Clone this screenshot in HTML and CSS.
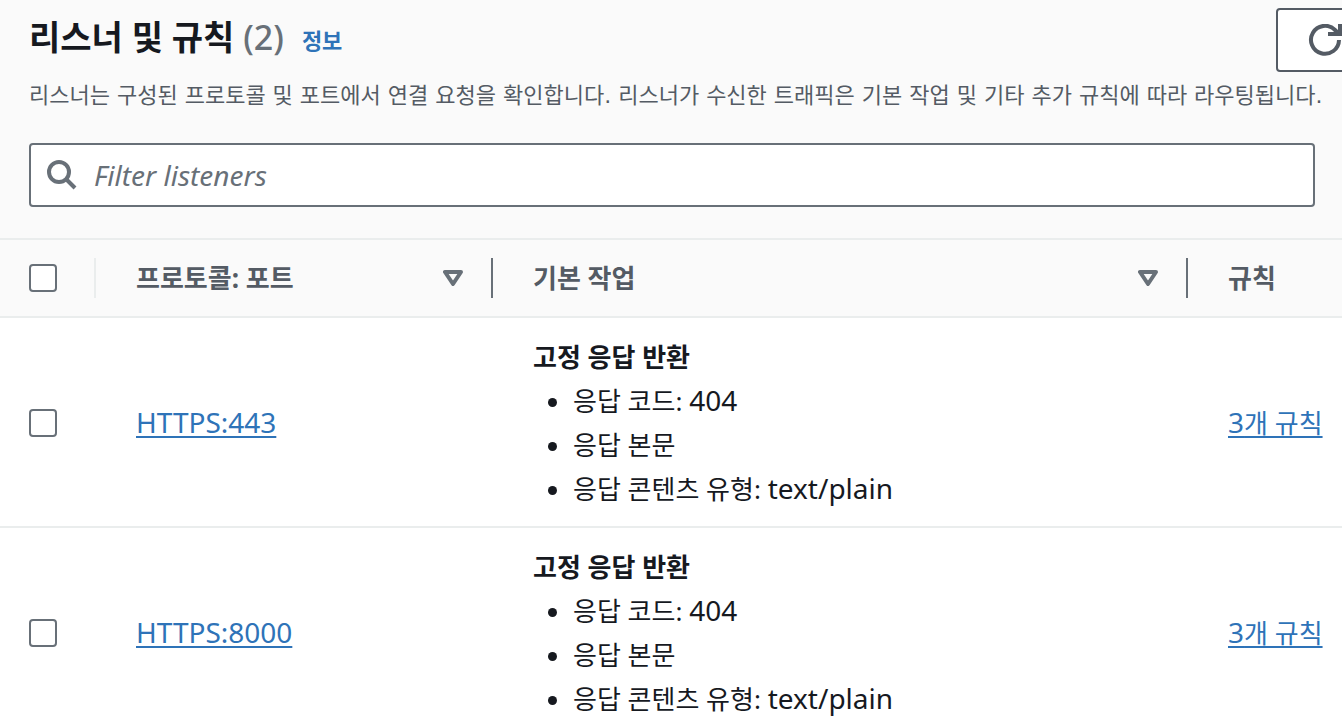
FILE: index.html
```html
<!DOCTYPE html>
<html lang="ko">
<head>
  <meta charset="UTF-8" />
  <meta name="viewport" content="width=device-width, initial-scale=1.0"/>
  <title>리스너 및 규칙</title>
  <link rel="stylesheet" href="styles.css">
</head>
<body>
  <main class="panel">
    <header class="panel-header">
      <div class="title-row">
        <h1>리스너 및 규칙 <span class="count">(2)</span></h1>
        <a class="info" href="#info">정보</a>
        <button class="refresh" type="button" aria-label="새로 고침">
          <svg viewBox="0 0 36 32" width="36" height="32" fill="none" stroke="currentColor" stroke-width="4">
            <path d="M32 16a14 14 0 1 1-4-10l4 4"/>
            <path d="M33 0v10H21"/>
          </svg>
        </button>
      </div>
      <p class="description">리스너는 구성된 프로토콜 및 포트에서 연결 요청을 확인합니다. 리스너가 수신한 트래픽은 기본 작업 및 기타 추가 규칙에 따라 라우팅됩니다.</p>
      <label class="filter">
        <svg viewBox="0 0 32 32" width="32" height="32" fill="none" stroke="currentColor" stroke-width="4">
          <circle cx="13" cy="13" r="10"/>
          <path d="M20 20l9 9"/>
        </svg>
        <input type="text" placeholder="Filter listeners" aria-label="Filter listeners">
      </label>
    </header>

    <table class="listeners">
      <colgroup>
        <col class="col-check">
        <col class="col-port">
        <col class="col-action">
        <col>
      </colgroup>
      <thead>
        <tr>
          <th><div class="cell light"><input type="checkbox" aria-label="모두 선택"></div></th>
          <th>
            <div class="cell">프로토콜: 포트
              <button class="sort" type="button" aria-label="프로토콜: 포트 정렬">
                <svg viewBox="0 0 20 16" width="20" height="16" fill="none" stroke="currentColor" stroke-width="4" stroke-linejoin="round"><path d="M2 2h16l-8 12z"/></svg>
              </button>
            </div>
          </th>
          <th>
            <div class="cell">기본 작업
              <button class="sort" type="button" aria-label="기본 작업 정렬">
                <svg viewBox="0 0 20 16" width="20" height="16" fill="none" stroke="currentColor" stroke-width="4" stroke-linejoin="round"><path d="M2 2h16l-8 12z"/></svg>
              </button>
            </div>
          </th>
          <th><div class="cell last">규칙</div></th>
        </tr>
      </thead>
      <tbody>
        <tr>
          <td><input type="checkbox" aria-label="HTTPS:443 선택"></td>
          <td><a class="latin" href="#https-443">HTTPS:443</a></td>
          <td>
            <strong>고정 응답 반환</strong>
            <ul>
              <li>응답 코드: <span class="latin">404</span></li>
              <li>응답 본문</li>
              <li>응답 콘텐츠 유형: <span class="latin">text/plain</span></li>
            </ul>
          </td>
          <td><a href="#rules-443"><span class="latin">3</span>개 규칙</a></td>
        </tr>
        <tr>
          <td><input type="checkbox" aria-label="HTTPS:8000 선택"></td>
          <td><a class="latin" href="#https-8000">HTTPS:8000</a></td>
          <td>
            <strong>고정 응답 반환</strong>
            <ul>
              <li>응답 코드: <span class="latin">404</span></li>
              <li>응답 본문</li>
              <li>응답 콘텐츠 유형: <span class="latin">text/plain</span></li>
            </ul>
          </td>
          <td><a href="#rules-8000"><span class="latin">3</span>개 규칙</a></td>
        </tr>
      </tbody>
    </table>
  </main>
</body>
</html>
```
FILE: styles.css
```css
* {
  box-sizing: border-box;
}
body {
  margin: 0;
  font-family: "Noto Sans", "Noto Sans CJK KR", sans-serif;
  font-size: 26px;
  line-height: 44px;
  color: #16191f;
  background: #fff;
  overflow-x: hidden;
}
a {
  color: #2e73b8;
  text-decoration-thickness: 2px;
  text-underline-offset: 3px;
}
.panel {
  overflow: hidden;
}
.panel-header {
  padding: 8px 27px 31px 29px;
  background: #fafafa;
}
.title-row {
  display: flex;
  align-items: flex-start;
}
h1 {
  margin: 7px 18px 0 0;
  font-size: 34px;
  line-height: 44px;
  white-space: nowrap;
}
.count {
  font-weight: 500;
  color: #687078;
}
.info {
  margin-top: 10px;
  font-size: 22px;
  font-weight: 700;
  text-decoration: none;
}
/* the action bar runs past the right edge of the panel */
.refresh {
  display: flex;
  flex-shrink: 0;
  align-items: center;
  justify-content: center;
  width: 98px;
  height: 64px;
  margin: 0 -59px 0 auto;
  padding: 0;
  color: #545b64;
  background: #fff;
  border: 2px solid #545b64;
  border-radius: 4px;
}
.description {
  margin: 8px 0 31px;
  font-family: "DejaVu Sans", "Noto Sans CJK KR", sans-serif;
  font-size: 22px;
  line-height: 32px;
  color: #545b64;
  white-space: nowrap;
}
.filter {
  display: flex;
  align-items: center;
  gap: 16px;
  height: 64px;
  padding: 0 15px;
  color: #687078;
  background: #fff;
  border: 2px solid #687078;
  border-radius: 4px;
}
.filter input {
  flex: 1;
  min-width: 0;
  padding: 0;
  font: inherit;
  font-size: 28px;
  color: #16191f;
  background: none;
  border: 0;
  outline: 0;
}
.filter input::placeholder {
  font-style: italic;
  color: #687078;
  opacity: 1;
}
.listeners {
  width: 100%;
  table-layout: fixed;
  border-collapse: separate;
  border-spacing: 0;
}
.col-check {
  width: 96px;
}
.col-port {
  width: 397px;
}
.col-action {
  width: 695px;
}
th {
  padding: 18px 0;
  text-align: left;
  color: #545b64;
  background: #fafafa;
  border-bottom: 2px solid #eaeded;
}
thead th {
  border-top: 2px solid #eaeded;
}
.cell {
  display: flex;
  align-items: center;
  justify-content: space-between;
  height: 40px;
  padding: 0 28px 0 40px;
  border-right: 2px solid #687078;
  white-space: nowrap;
}
.cell.light {
  padding-left: 29px;
  border-color: #eaeded;
}
.cell.last {
  padding-right: 0;
  border-right: 0;
}
.sort {
  display: flex;
  padding: 0;
  color: #687078;
  background: none;
  border: 0;
}
td {
  padding: 17px 0 15px 40px;
  border-bottom: 2px solid #eaeded;
  white-space: nowrap;
}
td:first-child {
  padding-left: 29px;
}
input[type="checkbox"] {
  appearance: none;
  display: block;
  width: 28px;
  height: 28px;
  margin: 0;
  background: #fff;
  border: 2px solid #687078;
  border-radius: 4px;
}
strong {
  display: block;
}
ul {
  margin: 0;
  padding-left: 40px;
}
.latin {
  font-size: 28px;
  line-height: 1;
}
```
